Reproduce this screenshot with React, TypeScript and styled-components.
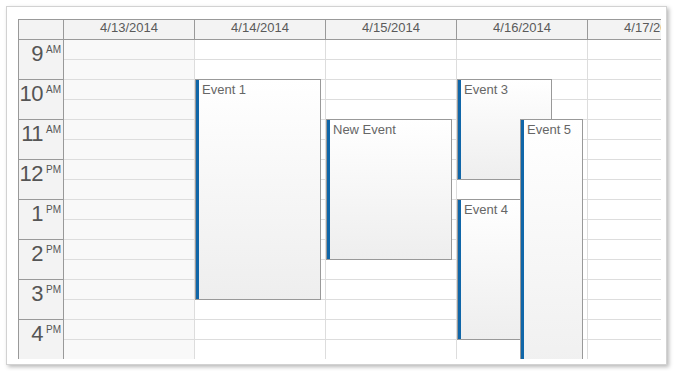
import styled, { createGlobalStyle } from "styled-components"

const GlobalStyle = createGlobalStyle`
  html, body {
    margin: 0;
    padding: 0;
    background: #fff;
  }
  body {
    font-family: "Liberation Sans", "Noto Sans", sans-serif;
  }
`

const HOUR_HEIGHT = 40
const FIRST_HOUR = 9

const days = [
  { date: "4/13/2014", weekend: true },
  { date: "4/14/2014", weekend: false },
  { date: "4/15/2014", weekend: false },
  { date: "4/16/2014", weekend: false },
  { date: "4/17/2014", weekend: false },
]

const hours = [
  { label: "9", suffix: "AM" },
  { label: "10", suffix: "AM" },
  { label: "11", suffix: "AM" },
  { label: "12", suffix: "PM" },
  { label: "1", suffix: "PM" },
  { label: "2", suffix: "PM" },
  { label: "3", suffix: "PM" },
  { label: "4", suffix: "PM" },
]

type CalEvent = {
  day: number
  text: string
  start: number
  end: number
  left: number
  width: number
  lane: number
}

const events: CalEvent[] = [
  { day: 1, text: "Event 1", start: 10, end: 15.5, left: 0, width: 126, lane: 0 },
  { day: 2, text: "New Event", start: 11, end: 14.5, left: 0, width: 126, lane: 0 },
  { day: 3, text: "Event 3", start: 10, end: 12.5, left: 0, width: 95, lane: 0 },
  { day: 3, text: "Event 4", start: 13, end: 16.5, left: 0, width: 95, lane: 0 },
  { day: 3, text: "Event 5", start: 11, end: 18, left: 63, width: 63, lane: 1 },
]

const Panel = styled.div`
  margin: 6px;
  width: 661px;
  height: 359px;
  box-sizing: border-box;
  padding: 12px 4px 5px 11px;
  background: #fff;
  border: 1px solid #d2d2d2;
  box-shadow: 2px 2px 4px rgba(0, 0, 0, 0.28);
`

const Calendar = styled.div`
  width: 643px;
  height: 340px;
  box-sizing: border-box;
  border-left: 1px solid #999;
  border-top: 1px solid #999;
  overflow: hidden;
  color: #555;
`

const HeaderRow = styled.div`
  display: flex;
  height: 20px;
`

const Corner = styled.div`
  flex: 0 0 45px;
  box-sizing: border-box;
  background: #f3f3f3;
  border-right: 1px solid #999;
  border-bottom: 1px solid #999;
`

const DayHeader = styled.div`
  flex: 0 0 131px;
  box-sizing: border-box;
  background: #f3f3f3;
  border-right: 1px solid #999;
  border-bottom: 1px solid #999;
  font-size: 13px;
  line-height: 16px;
  text-align: center;
  color: #5a5a5a;
  white-space: nowrap;
  overflow: hidden;
`

const Body = styled.div`
  display: flex;
`

const RowHeader = styled.div`
  flex: 0 0 45px;
  box-sizing: border-box;
  background: #f3f3f3;
  border-right: 1px solid #999;
`

const HourCell = styled.div`
  height: ${HOUR_HEIGHT}px;
  box-sizing: border-box;
  border-bottom: 1px solid #999;
  display: flex;
  justify-content: flex-end;
  align-items: flex-start;
  padding: 3px 2px 0 0;
  color: #555;
`

const HourNumber = styled.span`
  font-size: 22px;
  line-height: 21px;
  letter-spacing: -0.5px;
`

const HourSuffix = styled.span`
  font-size: 10px;
  line-height: 10px;
  margin: 2px 0 0 3px;
`

const DayColumn = styled.div<{ $weekend: boolean }>`
  flex: 0 0 131px;
  box-sizing: border-box;
  position: relative;
  border-right: 1px solid #ddd;
  background: ${({ $weekend }) => ($weekend ? "#f9f9f9" : "#fff")};
`

const Cell = styled.div`
  height: ${HOUR_HEIGHT / 2}px;
  box-sizing: border-box;
  border-bottom: 1px solid #ddd;
`

const EventBox = styled.div<{ $lane: number }>`
  position: absolute;
  box-sizing: border-box;
  border: 1px solid #999;
  background: linear-gradient(to bottom, #ffffff 0%, #eeeeee 100%);
  z-index: ${({ $lane }) => 2 + $lane};
  padding: 2px 4px 0 6px;
  font-size: 13px;
  line-height: 15px;
  color: #666;
  white-space: nowrap;
  overflow: hidden;

  &::before {
    content: "";
    position: absolute;
    left: -1px;
    top: -1px;
    bottom: -1px;
    width: 4px;
    background: #1066a8;
  }
`

const App = () => {
  return (
    <>
      <GlobalStyle />
      <Panel>
        <Calendar>
          <HeaderRow>
            <Corner />
            {days.map((d) => (
              <DayHeader key={d.date}>{d.date}</DayHeader>
            ))}
          </HeaderRow>
          <Body>
            <RowHeader>
              {hours.map((h) => (
                <HourCell key={h.label + h.suffix}>
                  <HourNumber>{h.label}</HourNumber>
                  <HourSuffix>{h.suffix}</HourSuffix>
                </HourCell>
              ))}
            </RowHeader>
            {days.map((d, di) => (
              <DayColumn key={d.date} $weekend={d.weekend}>
                {hours.map((h) => (
                  <div key={h.label + h.suffix}>
                    <Cell />
                    <Cell />
                  </div>
                ))}
                {events
                  .filter((e) => e.day === di)
                  .map((e) => (
                    <EventBox
                      key={e.text}
                      $lane={e.lane}
                      style={{
                        top: (e.start - FIRST_HOUR) * HOUR_HEIGHT - 1,
                        height: (e.end - e.start) * HOUR_HEIGHT + 1,
                        left: e.left,
                        width: e.width,
                      }}
                    >
                      {e.text}
                    </EventBox>
                  ))}
              </DayColumn>
            ))}
          </Body>
        </Calendar>
      </Panel>
    </>
  )
}

export default App
